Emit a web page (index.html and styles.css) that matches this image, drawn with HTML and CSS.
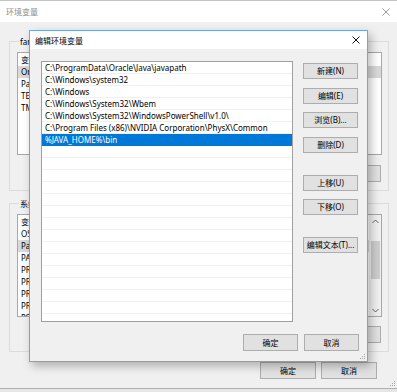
FILE: index.html
```html
<!DOCTYPE html>
<html lang="zh-CN">
<head>
    <meta charset="UTF-8">
    <title>环境变量</title>
    <link rel="stylesheet" href="styles.css">
</head>
<body>
    <div class="win">
        <div class="titlebar">
            <span class="title dim">环境变量</span>
            <svg class="close" width="8" height="8" viewBox="0 0 8 8"><path d="M0.5 0.5L7.5 7.5M7.5 0.5L0.5 7.5" stroke="#9a9a9a" stroke-width="1"/></svg>
        </div>

        <div class="group first">
            <div class="group-label">fanrong 的用户变量(U)</div>
            <div class="varlist">
                <div class="vrow head"><span class="c1">变量</span><span>值</span></div>
                <div class="vrow sel"><span class="c1">OneDrive</span><span>C:\Users\fanrong\OneDrive</span></div>
                <div class="vrow"><span class="c1">Path</span><span>C:\Users\fanrong\AppData\Local\Microsoft\WindowsApps;</span></div>
                <div class="vrow"><span class="c1">TEMP</span><span>C:\Users\fanrong\AppData\Local\Temp</span></div>
                <div class="vrow"><span class="c1">TMP</span><span>C:\Users\fanrong\AppData\Local\Temp</span></div>
            </div>
            <div class="group-btns">
                <button class="btn wide">新建(N)...</button>
                <button class="btn wide">编辑(E)...</button>
                <button class="btn wide">删除(D)</button>
            </div>
        </div>

        <div class="group">
            <div class="group-label">系统变量(S)</div>
            <div class="varlist scroll">
                <div class="rows">
                    <div class="vrow head"><span class="c1">变量</span><span>值</span></div>
                    <div class="vrow"><span class="c1">OS</span><span>Windows_NT</span></div>
                    <div class="vrow sel"><span class="c1">Path</span><span>C:\ProgramData\Oracle\Java\javapath;C:\Windows\system32</span></div>
                    <div class="vrow"><span class="c1">PATHEXT</span><span>.COM;.EXE;.BAT;.CMD;.VBS;.VBE;.JS;.JSE;.WSF;.WSH;.MSC</span></div>
                    <div class="vrow"><span class="c1">PROCESSOR_ARCHITECTURE</span><span>AMD64</span></div>
                    <div class="vrow"><span class="c1">PROCESSOR_IDENTIFIER</span><span>Intel64 Family 6 Model 142</span></div>
                    <div class="vrow"><span class="c1">PROCESSOR_LEVEL</span><span>6</span></div>
                    <div class="vrow"><span class="c1">PROCESSOR_REVISION</span><span>8e09</span></div>
                    <div class="vrow"><span class="c1">PSModulePath</span><span>%ProgramFiles%\WindowsPowerShell\Modules</span></div>
                </div>
                <div class="sbar">
                    <svg width="7" height="5" viewBox="0 0 7 5"><path d="M0.5 4L3.5 1L6.5 4" fill="none" stroke="#606060"/></svg>
                    <div class="track"><div class="thumb"></div></div>
                    <svg width="7" height="5" viewBox="0 0 7 5"><path d="M0.5 1L3.5 4L6.5 1" fill="none" stroke="#606060"/></svg>
                </div>
            </div>
            <div class="group-btns">
                <button class="btn wide">新建(W)...</button>
                <button class="btn wide">编辑(I)...</button>
                <button class="btn wide">删除(L)</button>
            </div>
        </div>

        <div class="footer">
            <button class="btn big">确定</button>
            <button class="btn big">取消</button>
        </div>
        <svg class="grip" width="7" height="7" viewBox="0 0 7 7"><path d="M5 1h1v1H5zM3 3h1v1H3zM5 3h1v1H5zM1 5h1v1H1zM3 5h1v1H3zM5 5h1v1H5z" fill="#a8a8a8"/></svg>

        <!-- dialog on top of the main window -->
        <div class="dlg">
            <div class="dlg-title">
                <span class="title">编辑环境变量</span>
                <svg class="close" width="8" height="8" viewBox="0 0 8 8"><path d="M0.5 0.5L7.5 7.5M7.5 0.5L0.5 7.5" stroke="#111" stroke-width="1"/></svg>
            </div>
            <div class="dlg-body">
                <div class="pathlist">
                    <div class="prow">C:\ProgramData\Oracle\Java\javapath</div>
                    <div class="prow">C:\Windows\system32</div>
                    <div class="prow">C:\Windows</div>
                    <div class="prow">C:\Windows\System32\Wbem</div>
                    <div class="prow">C:\Windows\System32\WindowsPowerShell\v1.0\</div>
                    <div class="prow">C:\Program Files (x86)\NVIDIA Corporation\PhysX\Common</div>
                    <div class="prow active">%JAVA_HOME%\bin</div>
                    <div class="prow"></div>
                    <div class="prow"></div>
                    <div class="prow"></div>
                    <div class="prow"></div>
                    <div class="prow"></div>
                    <div class="prow"></div>
                    <div class="prow"></div>
                    <div class="prow"></div>
                    <div class="prow"></div>
                    <div class="prow"></div>
                    <div class="prow"></div>
                    <div class="prow"></div>
                    <div class="prow"></div>
                    <div class="prow"></div>
                    <div class="prow"></div>
                </div>
                <div class="side">
                    <button class="btn">新建(N)</button>
                    <button class="btn m9">编辑(E)</button>
                    <button class="btn m8">浏览(B)...</button>
                    <button class="btn m9">删除(D)</button>
                    <button class="btn m22">上移(U)</button>
                    <button class="btn m8">下移(O)</button>
                    <button class="btn m22">编辑文本(T)...</button>
                </div>
            </div>
            <div class="dlg-foot">
                <button class="btn">确定</button>
                <button class="btn">取消</button>
            </div>
            <svg class="grip" width="7" height="7" viewBox="0 0 7 7"><path d="M5 1h1v1H5zM3 3h1v1H3zM5 3h1v1H5zM1 5h1v1H1zM3 5h1v1H3zM5 5h1v1H5z" fill="#a8a8a8"/></svg>
        </div>
    </div>
</body>
</html>
```

FILE: styles.css
```css
body {
    margin: 0;
    background: #e6e6e6;
    font-family: "Noto Sans", "Noto Sans CJK SC", sans-serif;
    font-size: 8px;
    color: #000;
}
.win {
    position: relative;
    width: 397px;
    height: 389px;
    box-sizing: border-box;
    background: #f0f0f0;
    border-bottom: 1px solid #b0b0b0;
    overflow: hidden;
}
.titlebar {
    height: 21px;
    border-top: 1px solid #c4c4c4;
    background: #fff;
    display: flex;
    align-items: center;
    justify-content: space-between;
    padding: 0 7px 0 6px;
}
.title {
    font-size: 8px;
    line-height: 11px;
}
.dim {
    color: #8c8c8c;
}
.close {
    display: block;
}

/* group boxes of the main window */
.group {
    margin: 12px 8px 0 9px;
    border: 1px solid #dcdcdc;
    padding: 0 6px 8px 7px;
}
.group.first {
    margin-top: 19px;
}
.group-label {
    width: fit-content;
    margin: -6px 0 0 2px;
    padding: 0 1px;
    line-height: 11px;
    background: #f0f0f0;
}
.varlist {
    margin-top: 5px;
    height: 103px;
    box-sizing: border-box;
    border: 1px solid #a8a8a8;
    background: #fff;
    overflow: hidden;
}
.varlist.scroll {
    display: flex;
}
.rows {
    flex: 1;
    overflow: hidden;
}
.vrow {
    display: flex;
    height: 12px;
    line-height: 12px;
    padding-left: 3px;
    white-space: nowrap;
}
.vrow.head {
    height: 13px;
    line-height: 13px;
}
.vrow.sel {
    background: #d9d9d9;
}
.c1 {
    width: 110px;
    flex: none;
}
.sbar {
    width: 12px;
    flex: none;
    background: #f0f0f0;
    display: flex;
    flex-direction: column;
    align-items: center;
    padding: 4px 0 3px;
    box-sizing: border-box;
}
.track {
    flex: 1;
    width: 100%;
    padding: 17px 1px 0 2px;
    box-sizing: border-box;
}
.thumb {
    height: 38px;
    background: #cdcdcd;
}
.group-btns {
    display: flex;
    justify-content: flex-end;
    gap: 6px;
    margin: 10px 1px 0 0;
}
.group + .group .group-btns {
    margin-top: 9px;
}

.btn {
    display: block;
    width: 55px;
    height: 16px;
    padding: 0;
    font-family: "Noto Sans", "Noto Sans CJK SC", sans-serif;
    font-size: 8px;
    line-height: 14px;
    color: #000;
    background: #e1e1e1;
    border: 1px solid #adadad;
    box-sizing: border-box;
}
.btn.wide {
    width: 60px;
    height: 17px;
}
.btn.big {
    width: 56px;
    height: 17px;
}
.footer {
    display: flex;
    justify-content: flex-end;
    gap: 5px;
    margin: 10px 20px 0 0;
}
.grip {
    position: absolute;
    right: 1px;
    bottom: 1px;
}

/* edit dialog */
.dlg {
    position: absolute;
    left: 29px;
    top: 30px;
    width: 339px;
    height: 332px;
    box-sizing: border-box;
    border: 1px solid #6fa6d8;
    background: #f0f0f0;
    box-shadow: 3px 4px 9px rgba(0, 0, 0, 0.28);
}
.dlg-title {
    height: 18px;
    background: #fff;
    display: flex;
    align-items: center;
    justify-content: space-between;
    padding: 0 7px 0 5px;
}
.dlg-body {
    display: flex;
    gap: 10px;
    padding: 12px 8px 0 11px;
}
.pathlist {
    width: 252px;
    height: 261px;
    box-sizing: border-box;
    border: 1px solid #a0a0a0;
    background: #fff;
    overflow: hidden;
}
.prow {
    height: 12px;
    line-height: 11px;
    padding-left: 3px;
    box-sizing: border-box;
    border-bottom: 1px solid #f0f0f0;
    white-space: nowrap;
}
.prow.active {
    background: #0078d7;
    border-bottom-color: #0078d7;
    color: #fff;
}
.side {
    padding-top: 2px;
}
.m8 {
    margin-top: 8px;
}
.m9 {
    margin-top: 9px;
}
.m22 {
    margin-top: 22px;
}
.dlg-foot {
    display: flex;
    justify-content: flex-end;
    gap: 6px;
    padding: 12px 8px 0 0;
}
.dlg-foot .btn {
    height: 17px;
}
```
